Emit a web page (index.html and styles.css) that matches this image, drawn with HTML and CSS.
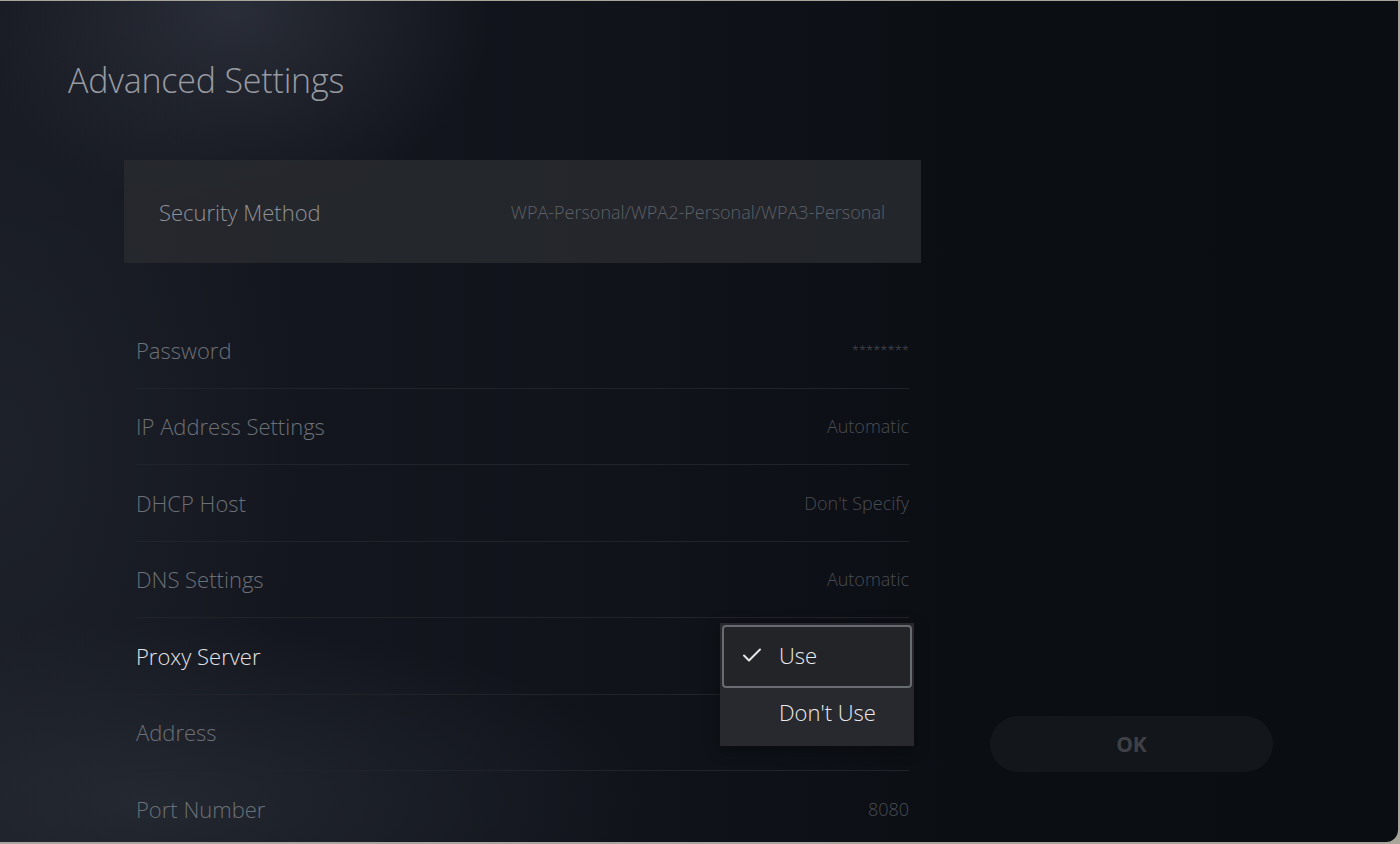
FILE: index.html
```html
<!DOCTYPE html>
<html lang="en">
<head>
<meta charset="utf-8">
<title>Advanced Settings</title>
<link rel="stylesheet" href="styles.css">
</head>
<body>
<div class="screen">
  <div class="main">
    <h1 class="title">Advanced Settings</h1>
    <div class="card">
      <span class="card-label">Security Method</span>
      <span class="card-value">WPA-Personal/WPA2-Personal/WPA3-Personal</span>
    </div>
    <ul class="list">
      <li class="row"><span class="label">Password</span><span class="value stars">********</span></li>
      <li class="row"><span class="label">IP Address Settings</span><span class="value">Automatic</span></li>
      <li class="row"><span class="label">DHCP Host</span><span class="value">Don't Specify</span></li>
      <li class="row"><span class="label">DNS Settings</span><span class="value">Automatic</span></li>
      <li class="row row-active"><span class="label">Proxy Server</span>
        <div class="dropdown">
          <div class="option option-selected">
            <svg class="check" width="20" height="16" viewBox="0 0 20 16"><path d="M2 8.5 L7 13.5 L18 2.5" fill="none" stroke="#e6e6e6" stroke-width="2" stroke-linecap="round" stroke-linejoin="round"/></svg>
            <span>Use</span>
          </div>
          <div class="option option-plain"><span>Don't Use</span></div>
        </div>
      </li>
      <li class="row"><span class="label">Address</span><span class="value"></span></li>
      <li class="row row-last"><span class="label">Port Number</span><span class="value">8080</span></li>
    </ul>
  </div>
  <div class="side">
    <button class="ok">OK</button>
  </div>
</div>
</body>
</html>
```

FILE: styles.css
```css
* { box-sizing: border-box; }
html, body { margin: 0; padding: 0; }
body {
  width: 1400px;
  height: 844px;
  background: #a9a59a;
  font-family: "Open Sans", "Noto Sans", sans-serif;
  overflow: hidden;
}
.screen {
  margin-top: 1px;
  width: 1398px;
  height: 841px;
  border-bottom-right-radius: 12px;
  overflow: hidden;
  display: flex;
  background:
    radial-gradient(ellipse 260px 200px at 230px 10px, rgba(60,64,76,0.55), rgba(60,64,76,0) 100%),
    radial-gradient(ellipse 500px 180px at 150px 800px, rgba(45,50,60,0.6), rgba(45,50,60,0) 100%),
    radial-gradient(ellipse 300px 500px at 0px 450px, rgba(35,39,48,0.6), rgba(35,39,48,0) 100%),
    linear-gradient(90deg, #161921 0%, #10131a 45%, #0b0e13 70%, #0a0d12 100%);
}
.main {
  width: 921px;
  flex: none;
  display: flex;
  flex-direction: column;
}
.main > * { flex: none; }
.title {
  margin: 59px 0 0 68px;
  font-size: 34px;
  line-height: 40px;
  font-weight: 300;
  color: #989ba2;
  letter-spacing: -0.2px;
}
.card {
  margin: 60px 0 0 124px;
  height: 103px;
  background: rgba(40,42,47,0.85);
  display: flex;
  align-items: center;
  justify-content: space-between;
  padding: 0 36px 0 35px;
}
.card-label {
  font-size: 22px;
  font-weight: 300;
  color: #8e9197;
}
.card-value {
  font-size: 18px;
  font-weight: 300;
  color: #5d6066;
}
.list {
  list-style: none;
  margin: 49px 0 0 136px;
  padding: 0;
  width: 773px;
}
.row {
  position: relative;
  height: 76.5px;
  border-bottom: 1px solid #20232a;
  display: flex;
  align-items: center;
  justify-content: space-between;
}
.row-last { border-bottom: none; }
.label {
  font-size: 22px;
  font-weight: 300;
  color: #6c7077;
}
.row-active .label { color: #e4e4e6; }
.value {
  font-size: 18px;
  font-weight: 300;
  color: #4a4d54;
}
.stars { font-size: 13px; }
.dropdown {
  position: absolute;
  right: -5px;
  top: 5px;
  width: 194px;
  background: #27292e;
  box-shadow: 0 4px 14px rgba(0,0,0,0.35);
  z-index: 2;
}
.option {
  display: flex;
  align-items: center;
  padding-left: 59px;
  font-size: 22px;
  font-weight: 300;
  color: #ececee;
}
.option-selected {
  position: relative;
  margin: 2px 2px 0;
  height: 63px;
  border: 2px solid #686b71;
  border-radius: 4px;
  padding: 0 0 3px 55px;
  background: #222428;
}
.check {
  position: absolute;
  left: 18px;
  top: 20px;
}
.option-plain {
  height: 58px;
  padding-bottom: 10px;
}
.side {
  flex: 1;
  display: flex;
  flex-direction: column;
  justify-content: flex-end;
  padding: 0 0 70px 69px;
}
.ok {
  width: 283px;
  height: 56px;
  border: none;
  border-radius: 28px;
  background: rgba(25,28,34,0.6);
  color: #3f4146;
  font-family: "Open Sans", "Noto Sans", sans-serif;
  font-weight: 700;
  font-size: 21px;
}
```
